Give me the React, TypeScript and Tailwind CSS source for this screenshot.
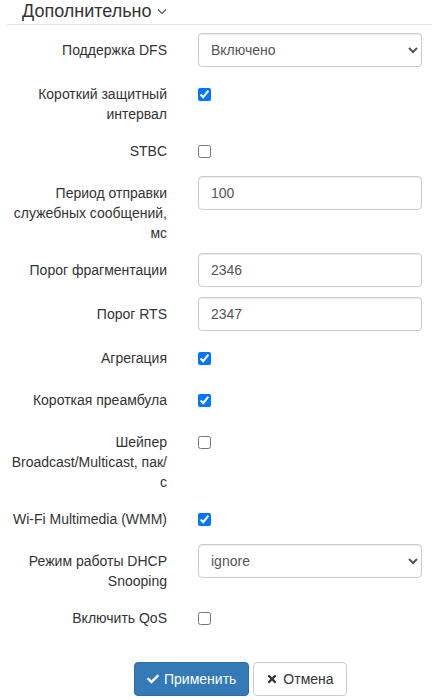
import React from 'react';
import { FaCheck, FaTimes } from 'react-icons/fa';

const Row: React.FC<{ label: string; tall?: boolean; children: React.ReactNode }> = ({ label, tall, children }) => (
  <div className={`flex mb-[10px] ${tall ? 'min-h-[34px]' : 'min-h-[32px]'}`}>
    <label className="ml-[11px] w-[156px] pt-[7px] text-right leading-5 text-[#333]">{label}</label>
    <div className="ml-[31px] w-[224px]">{children}</div>
  </div>
);

const Check: React.FC<{ checked?: boolean }> = ({ checked }) => (
  <div className="pt-[11px]">
    <input type="checkbox" defaultChecked={checked} className="m-0 block h-[13px] w-[13px]" />
  </div>
);

const inputCls =
  'block h-[34px] w-full rounded-[4px] border border-[#ccc] bg-white px-3 py-[6px] text-[14px] text-[#555] shadow-[inset_0_1px_1px_rgba(0,0,0,0.075)] outline-none';

export default function App() {
  const rows = [
    { label: 'Поддержка DFS', kind: 'select', value: 'Включено' },
    { label: 'Короткий защитный интервал', kind: 'check', value: true },
    { label: 'STBC', kind: 'check', value: false },
    { label: 'Период отправки служебных сообщений, мс', kind: 'input', value: '100' },
    { label: 'Порог фрагментации', kind: 'input', value: '2346' },
    { label: 'Порог RTS', kind: 'input', value: '2347' },
    { label: 'Агрегация', kind: 'check', value: true },
    { label: 'Короткая преамбула', kind: 'check', value: true },
    { label: 'Шейпер Broadcast/Multicast, пак/с', kind: 'check', value: false },
    { label: 'Wi-Fi Multimedia (WMM)', kind: 'check', value: true },
    { label: 'Режим работы DHCP Snooping', kind: 'select', value: 'ignore' },
    { label: 'Включить QoS', kind: 'check', value: false },
  ];

  return (
    <div className="min-h-[700px] bg-white font-['Liberation_Sans',Arial,sans-serif] text-[14px] text-[#333]">
      <div className="ml-[7px] flex h-[25px] items-start border-b border-[#e5e5e5] pl-[15px]">
        <span className="text-[18px] leading-[22px] text-[#333]">Дополнительно</span>
        <svg className="ml-[5px] mt-[8px]" width="10" height="7" viewBox="0 0 10 7" fill="none">
          <path d="M1 1.5 L5 5.5 L9 1.5" stroke="#555" strokeWidth="1.2" />
        </svg>
      </div>

      <form className="pt-[8px]">
        {rows.map((r, i) => (
          <div key={r.label} className={i === 0 ? 'mb-[1px]' : ''}>
            <Row label={r.label} tall={r.kind !== 'check'}>
              {r.kind === 'select' && (
                <select defaultValue={r.value as string} className={inputCls + ' pl-[8px]'}>
                  <option value={r.value as string}>{r.value as string}</option>
                </select>
              )}
              {r.kind === 'input' && <input type="text" defaultValue={r.value as string} className={inputCls} />}
              {r.kind === 'check' && <Check checked={r.value as boolean} />}
            </Row>
          </div>
        ))}

        <div className="ml-[134px] mt-[29px] flex gap-[4px]">
          <button
            type="button"
            className="flex h-[34px] items-center gap-[5px] rounded-[4px] border border-[#2e6da4] bg-[#337ab7] px-3 text-[14px] text-white"
          >
            <FaCheck className="h-[12px] w-[12px]" />
            Применить
          </button>
          <button
            type="button"
            className="flex h-[34px] items-center gap-[5px] rounded-[4px] border border-[#ccc] bg-white px-3 text-[14px] text-[#333]"
          >
            <FaTimes className="h-[12px] w-[12px]" />
            Отмена
          </button>
        </div>
      </form>
    </div>
  );
}
